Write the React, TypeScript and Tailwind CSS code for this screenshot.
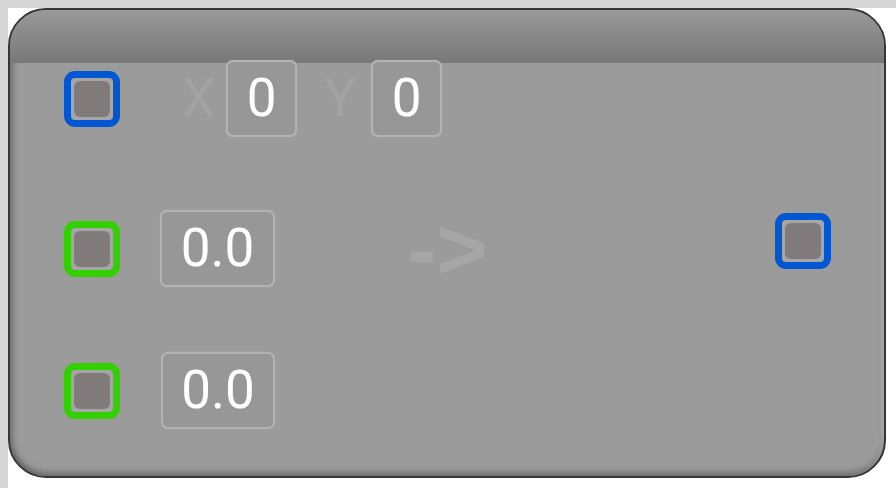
import React from 'react';

type PortProps = { color: 'blue' | 'green' };

function Port({ color }: PortProps) {
  const ring = color === 'blue' ? 'border-[#0057d1]' : 'border-[#33d000]';
  return (
    <div
      className={
        'w-[56px] h-[56px] shrink-0 rounded-[11px] border-[7px] bg-[#a6a6a6] p-[3px] ' +
        ring
      }
    >
      <div className="w-full h-full rounded-[6px] bg-[#807b7a]" />
    </div>
  );
}

function Field({ value, width }: { value: string; width: string }) {
  return (
    <div
      className={
        'h-[77px] flex items-center justify-center rounded-[7px] border-2 border-[#b3b3b3] bg-[#979797] text-white text-[53px] leading-none shadow-[0_0_1px_#b3b3b3] ' +
        width
      }
    >
      {value}
    </div>
  );
}

export default function App() {
  return (
    <div
      className="w-[896px] h-[488px] box-border border-t-[8px] border-l-[8px] border-[#d6d6d6] bg-white"
      style={{ fontFamily: 'Roboto, "Noto Sans", sans-serif' }}
    >
      <div className="w-[878px] h-[470px] rounded-[38px] border-2 border-[#363636] bg-[#9b9b9b] overflow-hidden flex flex-col shadow-[inset_5px_0_6px_-2px_rgba(0,0,0,0.25),inset_0_-6px_6px_-2px_rgba(0,0,0,0.25),inset_-4px_0_3px_-2px_rgba(255,255,255,0.2)]">
        <div className="h-[53px] shrink-0 bg-linear-to-b from-[#999999] to-[#787878]" />

        {/* row 1: position */}
        <div className="h-[77px] flex items-center mt-[-3px] pl-[54px]">
          <Port color="blue" />
          <span className="ml-[62px] text-[53px] leading-none text-[#a3a3a3]">X</span>
          <div className="ml-[11px]">
            <Field value="0" width="w-[71px]" />
          </div>
          <span className="ml-[27px] text-[53px] leading-none text-[#a3a3a3]">Y</span>
          <div className="ml-[15px]">
            <Field value="0" width="w-[71px]" />
          </div>
        </div>

        {/* row 2: value + output */}
        <div className="h-[77px] flex items-center mt-[73px] pl-[54px]">
          <Port color="green" />
          <div className="ml-[40px]">
            <Field value="0.0" width="w-[115px]" />
          </div>
          <span
            className="ml-[132px] text-[88px] leading-none font-bold text-[#a6a6a6]"
            style={{ fontFamily: '"Liberation Sans", Arial, sans-serif' }}
          >
            -&gt;
          </span>
          <div className="ml-auto mr-[53px] mt-[-16px]">
            <Port color="blue" />
          </div>
        </div>

        {/* row 3: value */}
        <div className="h-[77px] flex items-center mt-[65px] pl-[54px]">
          <Port color="green" />
          <div className="ml-[41px]">
            <Field value="0.0" width="w-[114px]" />
          </div>
        </div>
      </div>
    </div>
  );
}
